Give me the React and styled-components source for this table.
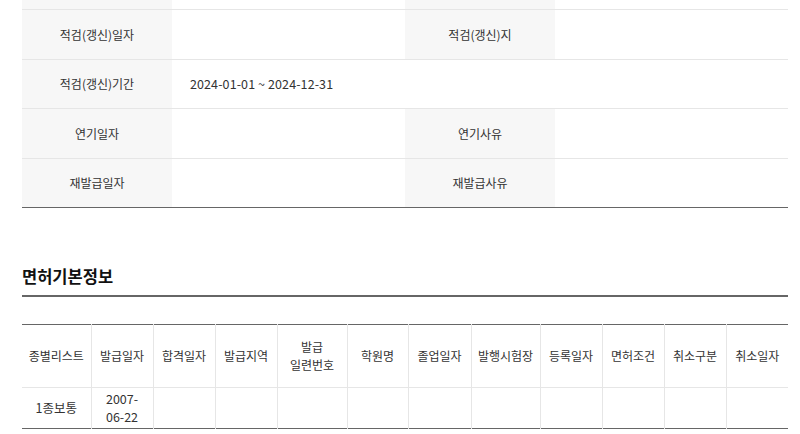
import React from "react";
import styled, { createGlobalStyle } from "styled-components";

const GlobalStyle = createGlobalStyle`
  * { box-sizing: border-box; }
  html, body {
    margin: 0;
    padding: 0;
    background: #fff;
    overflow: hidden;
  }
  body {
    font-family: "Noto Sans CJK KR", "Noto Sans", sans-serif;
    color: #333;
  }
`;

const Page = styled.div`
  width: 800px;
  height: 434px;
  overflow: hidden;
`;

const Inner = styled.div`
  padding: 0 12px 0 22px;
  margin-top: -40px;
`;

const InfoTable = styled.table`
  width: 766px;
  border-collapse: collapse;
  table-layout: fixed;
  border-bottom: 1px solid #666;
  font-size: 12px;

  tr {
    border-top: 1px solid #e6e6e6;
  }
  tr:first-child {
    border-top: none;
  }
`;

const Label = styled.th`
  width: 150px;
  height: 49.5px;
  background: #f7f7f7;
  font-weight: 400;
  text-align: center;
  color: #333;
  padding: 0;
`;

const Value = styled.td`
  width: 233px;
  padding: 0 18px;
  color: #333;
  font-size: 12.5px;
  letter-spacing: 0.1px;
`;

const Heading = styled.h3`
  margin: 57px 0 0;
  padding-bottom: 7px;
  font-size: 16.5px;
  font-weight: 700;
  color: #111;
  line-height: 23px;
  border-bottom: 2px solid #666;
`;

const GridTable = styled.table`
  margin-top: 27px;
  width: 766px;
  border-collapse: collapse;
  table-layout: fixed;
  border-top: 1px solid #666;
  border-bottom: 1px solid #666;
  font-size: 12px;
  text-align: center;
  word-break: keep-all;

  th, td {
    border-left: 1px solid #e6e6e6;
    padding: 0 6px;
    line-height: 18px;
    color: #333;
  }
  th:first-child, td:first-child {
    border-left: none;
  }
`;

const HeadRow = styled.tr`
  height: 63px;
  border-bottom: 1px solid #e6e6e6;

  th {
    font-weight: 400;
  }
`;

const DataRow = styled.tr`
  height: 40px;
  td {
    padding: 2px 10px;
    font-size: 12.5px;
  }
`;

const cols = [69, 62, 62, 62, 70, 61, 63, 69, 62, 62, 62, 62];
const heads = [
  "종별리스트",
  "발급일자",
  "합격일자",
  "발급지역",
  "발급 일련번호",
  "학원명",
  "졸업일자",
  "발행시험장",
  "등록일자",
  "면허조건",
  "취소구분",
  "취소일자",
];
const rowData = ["1종보통", "2007-06-22", "", "", "", "", "", "", "", "", "", ""];

export default function App() {
  return (
    <Page>
      <GlobalStyle />
      <Inner>
        <InfoTable>
          <tbody>
            <tr>
              <Label />
              <Value />
              <Label />
              <Value />
            </tr>
            <tr>
              <Label>적검(갱신)일자</Label>
              <Value />
              <Label>적검(갱신)지</Label>
              <Value />
            </tr>
            <tr>
              <Label>적검(갱신)기간</Label>
              <Value colSpan={3}>2024-01-01 ~ 2024-12-31</Value>
            </tr>
            <tr>
              <Label>연기일자</Label>
              <Value />
              <Label>연기사유</Label>
              <Value />
            </tr>
            <tr>
              <Label>재발급일자</Label>
              <Value />
              <Label>재발급사유</Label>
              <Value />
            </tr>
          </tbody>
        </InfoTable>

        <Heading>면허기본정보</Heading>

        <GridTable>
          <colgroup>
            {cols.map((w, i) => (
              <col key={i} style={{ width: w }} />
            ))}
          </colgroup>
          <thead>
            <HeadRow>
              {heads.map((h) => (
                <th key={h}>{h}</th>
              ))}
            </HeadRow>
          </thead>
          <tbody>
            <DataRow>
              {rowData.map((d, i) => (
                <td key={i}>{d}</td>
              ))}
            </DataRow>
          </tbody>
        </GridTable>
      </Inner>
    </Page>
  );
}
